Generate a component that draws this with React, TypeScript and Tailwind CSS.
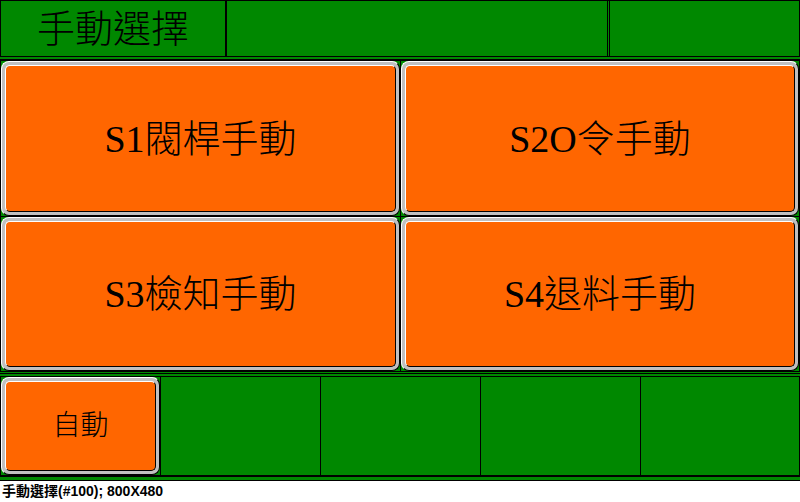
import type { ReactNode } from "react";

const SERIF =
  "font-['Liberation_Serif','Noto_Sans_CJK_TC',serif] font-light";

function PanelButton({ children, size }: { children: ReactNode; size: string }) {
  return (
    <button
      type="button"
      className="flex h-full w-full rounded-[8px] border border-t-white border-l-white border-r-black border-b-black bg-[#c0c0c0] p-[3px] text-black"
    >
      <span
        className={`flex h-full w-full items-center justify-center rounded-[5px] border border-t-white border-l-white border-r-black border-b-black bg-[#ff6600] leading-none whitespace-nowrap ${size}`}
      >
        {children}
      </span>
    </button>
  );
}

function Cell({ children }: { children?: ReactNode }) {
  return <div className="bg-[#008800]">{children}</div>;
}

const stations = ["S1閥桿手動", "S2O令手動", "S3檢知手動", "S4退料手動"];

export default function App() {
  return (
    <div className={`bg-white text-black ${SERIF}`}>
      <main className="border-b border-black bg-[#008800] pb-[3px]">
        <header className="grid h-[57px] grid-cols-[225fr_382fr_1px_190fr] border border-black">
          <h1 className="flex items-center justify-center border-r border-black text-[38px] leading-none font-light whitespace-nowrap">
            手動選擇
          </h1>
          <div className="border-x border-black" />
          <div />
          <div className="border-l border-black" />
        </header>

        <section className="mt-[2px] grid grid-cols-[399fr_398fr] grid-rows-[155px_154px] gap-px border border-t-2 border-black bg-black">
          {stations.map((name) => (
            <Cell key={name}>
              <PanelButton size="text-[38px]">{name}</PanelButton>
            </Cell>
          ))}
        </section>

        <div className="mt-px h-px bg-black" />

        <nav className="mt-[2px] grid h-[101px] grid-cols-[159fr_159fr_159fr_159fr_158fr] gap-px border border-b-2 border-black bg-black">
          <Cell>
            <PanelButton size="text-[28px]">自動</PanelButton>
          </Cell>
          <Cell />
          <Cell />
          <Cell />
          <Cell />
        </nav>
      </main>

      <footer className="px-[2px] font-['Liberation_Sans','Noto_Sans_CJK_TC',sans-serif] text-[14px] leading-[20px] font-bold">
        手動選擇(#100); 800X480
      </footer>
    </div>
  );
}
